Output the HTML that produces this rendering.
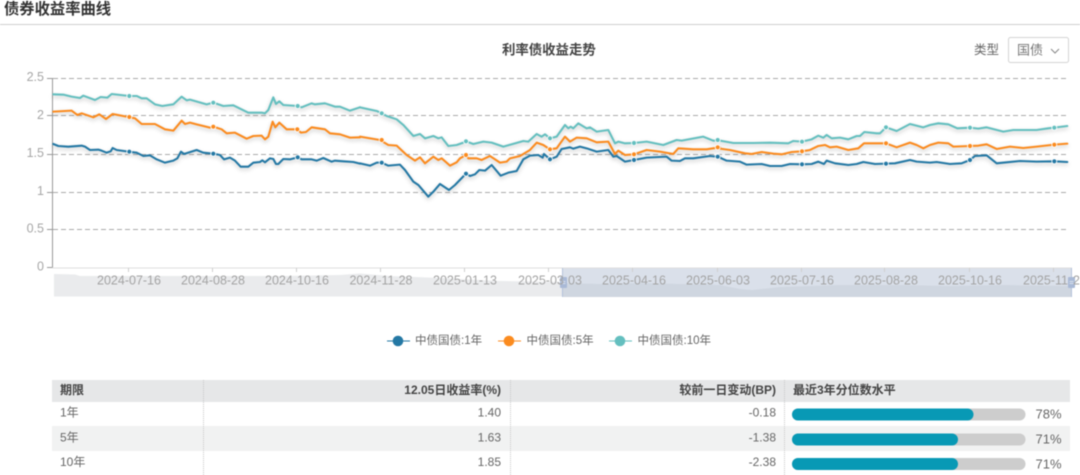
<!DOCTYPE html>
<html lang="zh"><head><meta charset="utf-8"><title>债券收益率曲线</title>
<style>
html,body{margin:0;padding:0;background:#fff;width:1080px;height:475px;overflow:hidden}
svg{display:block;filter:blur(.45px)}
text{font-family:"Liberation Sans","Noto Sans CJK SC",sans-serif;dominant-baseline:central}
.l{fill:none;stroke-width:6.2;stroke-linejoin:round;stroke-linecap:round}
.ax{font-size:12.5px;fill:#a6a6a6}
.xl{font-size:12.5px;fill:#a3a3a3;text-anchor:middle}
.lg{font-size:11.5px;fill:#666}
.th{font-size:12px;font-weight:bold;fill:#444}
.td{font-size:12px;fill:#666}
.r{text-anchor:end}
.pc{font-size:13px;fill:#666}
</style></head><body>
<svg width="1080" height="475" viewBox="0 0 1080 475" xmlns="http://www.w3.org/2000/svg">
<rect width="1080" height="475" fill="#fff"/>
<text x="4" y="9.500" font-size="15.3" font-weight="bold" fill="#333">债券收益率曲线</text>
<rect x="0" y="24" width="1080" height="1" fill="#cfcfcf"/>
<text x="502" y="50" font-size="13.4" font-weight="bold" fill="#444">利率债收益走势</text>
<text x="974" y="50" font-size="12.5" fill="#666">类型</text>
<rect x="1008.500" y="37.500" width="60" height="25" rx="2" fill="#fff" stroke="#d4d4d4"/>
<text x="1017" y="50" font-size="13" fill="#777">国债</text>
<path d="M1051 49l4 4 4-4" fill="none" stroke="#888" stroke-width="1"/>

<!-- grid -->
<g stroke="#aaa" stroke-width="1" stroke-dasharray="5 3">
<path d="M53 78.500H1066M53 115.500H1066M53 154.500H1066M53 192.500H1066M53 229.500H1066"/>
</g>
<path d="M52.500 78V268" stroke="#999" stroke-width="1"/>
<path d="M47 78.500h6M47 115.500h6M47 154.500h6M47 192.500h6M47 229.500h6M47 267.500h6" stroke="#999" stroke-width="1"/>
<g class="ax r">
<text x="44" y="77">2.5</text><text x="44" y="115">2</text><text x="44" y="153">1.5</text><text x="44" y="191">1</text><text x="44" y="228.500">0.5</text><text x="44" y="266.500">0</text>
</g>

<!-- datazoom -->
<path d="M54 274L75 274.500 80 276 130 276 200 276 280 276 340 275 360 273.500 390 276 440 278 500 281 562 282 V296.500H54Z" fill="#eaebed"/>
<rect x="562" y="268" width="510" height="29" fill="#dae0ea"/>
<path d="M562 283L600 284 640 283 720 285 740 289 752 290 780 287 840 285 900 285 950 286 1000 285 1072 286V297H562Z" fill="#cfd6e0"/>
<path d="M52 268H1072" stroke="#dedede" stroke-width="1"/>
<path d="M128.500 268v4M212.500 268v4M296.500 268v4M380.500 268v4M464.500 268v4M548.500 268v4M632.500 268v4M801.500 268v4M884.500 268v4M969.500 268v4M1053.500 268v4M717.500 268v4" stroke="#cfcfcf" stroke-width="1"/>
<path d="M562.500 268V297M1071.500 268V297" stroke="#b4c2da" stroke-width="1"/>
<rect x="560" y="277" width="7" height="11" rx="1" fill="#a9b9d6"/>
<path d="M561.500 281.500h4M561.500 283.500h4" stroke="#e8edf5" stroke-width=".8"/>
<rect x="1068" y="277" width="7" height="11" rx="1" fill="#a9b9d6"/>
<path d="M1069.500 281.500h4M1069.500 283.500h4" stroke="#e8edf5" stroke-width=".8"/>
<g class="xl">
<text x="129" y="280.500">2024-07-16</text><text x="213" y="280.500">2024-08-28</text><text x="297" y="280.500">2024-10-16</text><text x="381" y="280.500">2024-11-28</text><text x="465" y="280.500">2025-01-13</text><text x="718" y="280.500">2025-06-03</text><text x="634" y="280.500">2025-04-16</text><text x="802" y="280.500">2025-07-16</text><text x="886" y="280.500">2025-08-28</text><text x="970" y="280.500">2025-10-16</text>
</g>
<text class="ax" x="518" y="280.500" style="fill:#a3a3a3">2025-03</text>
<text class="ax" x="568" y="280.500" style="fill:#a3a3a3">03</text>
<text class="ax" x="1023" y="280.500" style="fill:#a3a3a3">2025-11</text>
<text class="ax" x="1073" y="280.500" style="fill:#a3a3a3">2</text>

<!-- series -->
<g style="filter:drop-shadow(0 2px 2px rgba(0,0,0,.22))">
<g stroke="#2478a4" class="l">
<polyline transform="matrix(.3333 0 0 .3333 0 130)" points="160,42 175,48 205,50 245,47 255,50 270,60 295,59 305,62 320,68 332,64 338,54 350,60 385,65 410,68 430,78 450,76 470,88 495,98 520,92 532,85 543,65 552,72 590,60 610,68 640,71 660,75 672,88 690,83 705,92 722,110 745,110 760,98 780,96 787,91 795,97 810,85 820,87 828,102 835,102 850,87 870,88 893,82 905,88 935,88 950,92 970,84 995,95 1005,92 1030,94 1060,96 1080,101"/>
<polyline transform="matrix(.3333 0 0 .3333 360 30)" points="0,400 30,407 50,398 65,398 85,407 120,404 135,420 160,455 175,465 205,500 222,483 240,462 267,480 285,465 318,431 330,438 345,433 358,420 375,422 395,405 422,437 445,428 470,423 490,388 510,377 535,375 548,383 552,372 570,388 590,380 605,357 630,352 640,356 660,350 680,355 710,365 745,360 760,380 770,378 795,395 822,390 860,383 920,380 935,392 960,393 975,385 1000,385 1050,378 1080,381"/>
<polyline transform="matrix(.3333 0 0 .3333 720 30)" points="0,383 20,392 60,395 80,404 125,402 150,408 185,408 210,402 246,403 275,402 295,395 312,402 320,392 345,400 385,405 410,402 430,396 465,402 498,401 525,400 570,390 590,395 630,398 650,396 690,402 725,400 750,390 765,378 800,376 830,400 860,397 900,393 950,395 1003,394 1042,396"/>
</g>
<g stroke="#fb8b1f" class="l">
<polyline transform="matrix(.3333 0 0 .3333 0 0)" points="160,335 215,332 232,345 245,340 280,352 298,343 318,357 338,342 385,351 405,355 425,372 465,372 495,388 520,392 545,362 555,372 570,368 590,373 630,383 640,380 665,388 680,400 705,398 740,416 760,408 785,407 795,418 805,410 818,365 826,382 838,368 860,388 892,388 903,398 918,396 935,382 975,388 990,400 1020,403 1050,413 1080,412"/>
<polyline transform="matrix(.3333 0 0 .3333 360 30)" points="0,320 60,330 85,345 110,347 140,375 165,392 180,382 195,400 220,380 235,390 245,385 270,407 290,397 300,385 318,375 325,385 350,385 365,390 390,378 420,398 440,395 450,385 480,378 510,360 530,338 550,345 570,358 590,355 615,320 630,335 650,323 680,325 710,337 745,335 765,372 775,362 795,375 822,373 860,360 900,365 940,372 955,355 1000,358 1040,358 1080,352"/>
<polyline transform="matrix(.3333 0 0 .3333 720 30)" points="0,356 30,360 75,370 95,372 125,366 160,371 185,373 215,366 246,364 270,360 295,348 315,345 330,352 350,350 385,360 415,355 432,340 470,340 498,340 530,352 570,338 590,345 610,355 630,345 655,338 685,340 700,350 750,348 775,347 800,343 830,357 870,350 910,354 950,350 1003,344 1042,341"/>
</g>
<g stroke="#64bfbf" class="l">
<polyline transform="matrix(.3333 0 0 .3333 0 0)" points="160,283 190,284 215,290 240,294 250,287 285,300 302,291 322,293 335,282 388,288 410,288 425,295 440,295 465,313 487,318 520,313 545,290 560,301 570,299 620,313 640,308 670,318 700,316 745,338 785,338 795,340 805,330 820,292 828,312 838,304 850,315 893,318 905,322 935,310 945,313 975,310 1005,320 1020,320 1050,332 1080,322"/>
<polyline transform="matrix(.3333 0 0 .3333 360 30)" points="0,232 50,243 65,250 80,258 110,268 130,285 160,318 180,312 195,325 220,318 235,325 245,322 265,348 290,345 310,338 318,334 340,342 370,335 395,338 430,350 465,340 490,333 505,335 530,312 545,320 555,313 570,325 590,320 615,285 625,295 632,290 640,295 655,280 680,295 690,292 710,305 745,300 765,340 775,335 795,340 822,339 860,335 910,345 950,330 965,332 1030,320 1060,332 1080,331"/>
<polyline transform="matrix(.3333 0 0 .3333 720 30)" points="0,332 40,339 100,339 150,338 205,340 220,333 246,335 275,328 295,317 310,323 320,315 335,325 360,323 385,328 410,318 420,318 433,306 470,310 480,310 498,292 530,303 570,282 610,292 630,285 655,280 685,283 712,295 750,293 775,296 800,292 850,305 880,300 950,300 985,295 1003,293 1042,288"/>
</g>
</g>
<!-- symbols -->
<g stroke="#fff" stroke-width=".8">
<g fill="#2478a4">
<circle cx="129.300" cy="151.700" r="2.500"/><circle cx="213.300" cy="153.700" r="2.500"/><circle cx="297.700" cy="157.300" r="2.500"/><circle cx="381.700" cy="162.700" r="2.500"/><circle cx="466" cy="173.700" r="2.500"/><circle cx="550" cy="159.300" r="2.500"/><circle cx="634" cy="160" r="2.500"/><circle cx="717.700" cy="156.700" r="2.500"/><circle cx="802" cy="164.300" r="2.500"/><circle cx="886" cy="163.700" r="2.500"/><circle cx="970" cy="160" r="2.500"/><circle cx="1054.300" cy="161.300" r="2.500"/>
</g>
<g fill="#fb8b1f">
<circle cx="129.300" cy="117" r="2.500"/><circle cx="213.300" cy="126.700" r="2.500"/><circle cx="297.300" cy="129.300" r="2.500"/><circle cx="381.700" cy="140" r="2.500"/><circle cx="466" cy="155" r="2.500"/><circle cx="550" cy="149.300" r="2.500"/><circle cx="634" cy="154.300" r="2.500"/><circle cx="717.700" cy="147.300" r="2.500"/><circle cx="802" cy="151.300" r="2.500"/><circle cx="886" cy="143.300" r="2.500"/><circle cx="970" cy="146" r="2.500"/><circle cx="1054.300" cy="144.700" r="2.500"/>
</g>
<g fill="#64bfbf">
<circle cx="129.300" cy="96" r="2.500"/><circle cx="213.300" cy="102.700" r="2.500"/><circle cx="297.700" cy="106" r="2.500"/><circle cx="381.700" cy="113.300" r="2.500"/><circle cx="466" cy="141.300" r="2.500"/><circle cx="550" cy="138.300" r="2.500"/><circle cx="634" cy="143" r="2.500"/><circle cx="717.700" cy="140" r="2.500"/><circle cx="802" cy="141.700" r="2.500"/><circle cx="886" cy="127.300" r="2.500"/><circle cx="970" cy="127.700" r="2.500"/><circle cx="1054.300" cy="127.700" r="2.500"/>
</g>
</g>

<!-- legend -->
<path d="M387 341h23" stroke="#2478a4" stroke-width="1"/><circle cx="398" cy="341" r="5.300" fill="#2478a4"/>
<text class="lg" x="415" y="341">中债国债:1年</text>
<path d="M498 341h23" stroke="#fb8b1f" stroke-width="1"/><circle cx="509" cy="341" r="5.300" fill="#fb8b1f"/>
<text class="lg" x="526.500" y="341">中债国债:5年</text>
<path d="M609 341h23" stroke="#64bfbf" stroke-width="1"/><circle cx="620" cy="341" r="5.300" fill="#64bfbf"/>
<text class="lg" x="637.500" y="341">中债国债:10年</text>

<!-- table -->
<rect x="52" y="380" width="1018" height="22" fill="#e6e7e8"/>
<rect x="52" y="426" width="1018" height="25" fill="#f1f2f2"/>
<path d="M203.500 380V475M510.500 380V475M784.500 380V475" stroke="#c8c8c8" stroke-width="1" stroke-dasharray="1 1"/>
<text class="th" x="60" y="390">期限</text>
<text class="th r" x="501" y="390">12.05日收益率(%)</text>
<text class="th r" x="776" y="390">较前一日变动(BP)</text>
<text class="th" x="793" y="390">最近3年分位数水平</text>

<text class="td" x="60" y="412.500">1年</text><text class="td r" x="501" y="412.500">1.40</text><text class="td r" x="776" y="412.500">-0.18</text>
<text class="td" x="60" y="437.500">5年</text><text class="td r" x="501" y="437.500">1.63</text><text class="td r" x="776" y="437.500">-1.38</text>
<text class="td" x="60" y="462">10年</text><text class="td r" x="501" y="462">1.85</text><text class="td r" x="776" y="462">-2.38</text>

<rect x="792" y="408.500" width="233.500" height="12" rx="6" fill="#cdcdcd"/><rect x="792" y="408.500" width="181.500" height="12" rx="6" fill="#0899b5"/>
<rect x="792" y="433.500" width="233.500" height="12" rx="6" fill="#cdcdcd"/><rect x="792" y="433.500" width="166" height="12" rx="6" fill="#0899b5"/>
<rect x="792" y="458" width="233.500" height="12" rx="6" fill="#cdcdcd"/><rect x="792" y="458" width="166" height="12" rx="6" fill="#0899b5"/>
<text class="pc" x="1035.500" y="414">78%</text>
<text class="pc" x="1035.500" y="439">71%</text>
<text class="pc" x="1035.500" y="464">71%</text>
</svg>
</body></html>
